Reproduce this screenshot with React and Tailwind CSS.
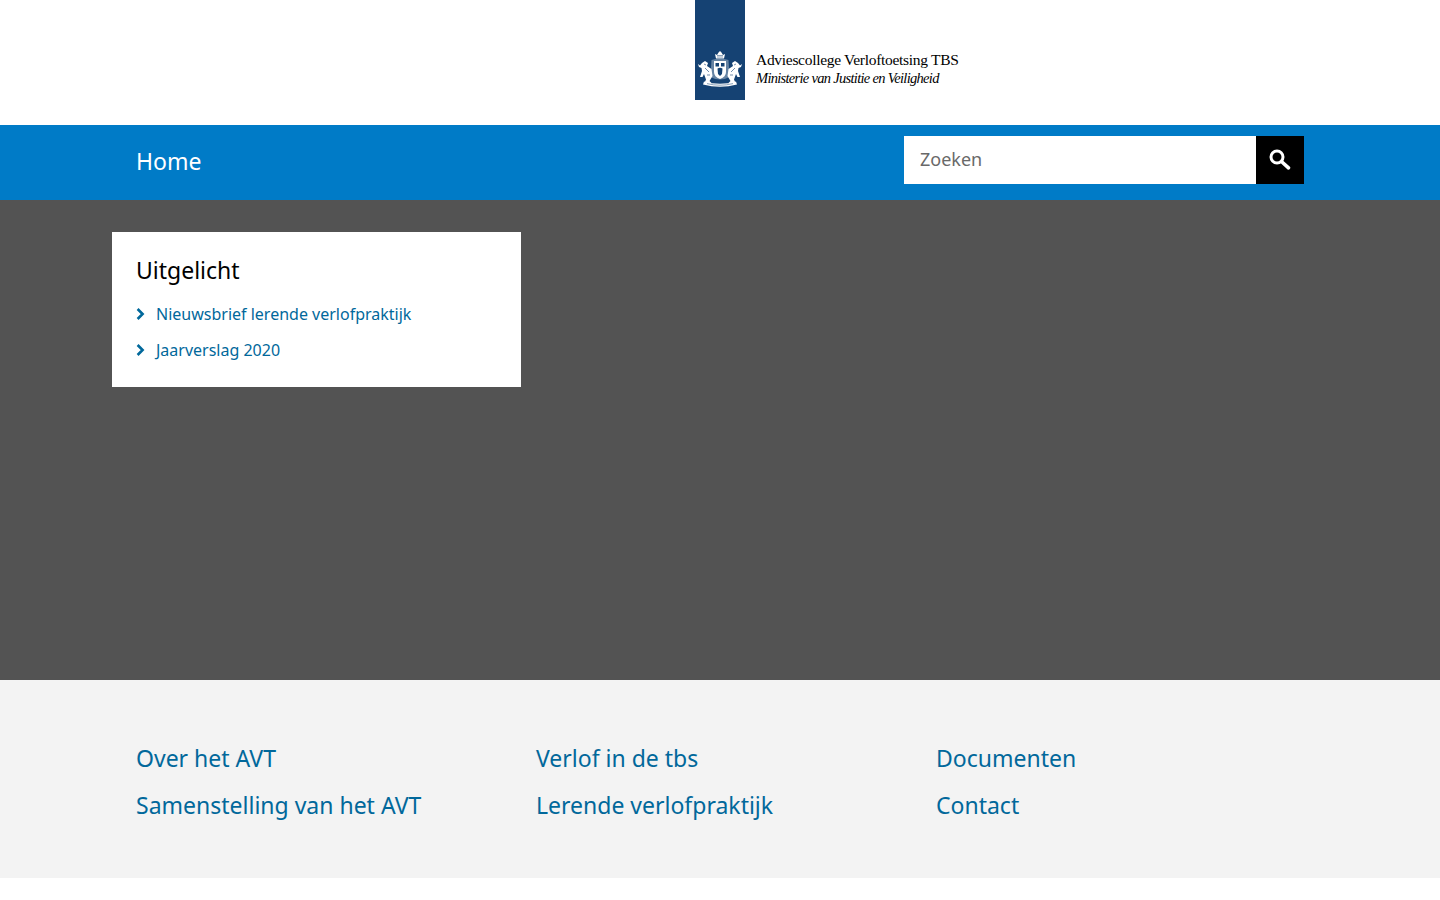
import React from 'react'

const sans = 'font-["Noto_Sans","Open_Sans",sans-serif]'

const Crest = () => (
  <svg width="46" height="38" viewBox="0 0 46 38" className="mt-[50px] mx-auto" fill="#fff">
    {/* crown */}
    <path d="M19 8.5 L18 4 L20 5 L21.5 2.5 L23 1 L24.5 2.5 L26 5 L28 4 L27 8.5 Z" />
    <path d="M20 5.5 H26 M20 7 H26" stroke="#154273" strokeWidth=".5" />
    {/* mantle */}
    <path d="M14.5 10 Q23 7.5 31.5 10 L32.5 27 Q23 32 13.5 27 Z" fillOpacity=".35" />
    {/* shield */}
    <path d="M17 11 H29 V22 Q29 27 23 29 Q17 27 17 22 Z" />
    <path d="M18.5 13 H22 V16.5 H18.5 Z M24 13 H27.5 V16.5 H24 Z M20.5 18.5 Q23 17 25.5 18.5 L25 24 L23 26 L21 24 Z" fill="#154273" />
    {/* left lion */}
    <path d="M1 14 L3 15.5 L5 13 L8 11 L11 13 L10 16 L14.5 19 L15.5 26 L12.5 31 L14.5 33 H7.5 L9 29.5 L7 24 L5.5 27 H3 L5 21 L4.5 18 L2 17 Z" />
    <path d="M7 14 L9 15 M8 18 L12 22 M10 25 L13 25" stroke="#154273" strokeWidth=".6" fill="none" />
    {/* right lion */}
    <path d="M45 14 L43 15.5 L41 13 L38 11 L35 13 L36 16 L31.5 19 L30.5 26 L33.5 31 L31.5 33 H38.5 L37 29.5 L39 24 L40.5 27 H43 L41 21 L41.5 18 L44 17 Z" />
    <path d="M39 14 L37 15 M38 18 L34 22 M36 25 L33 25" stroke="#154273" strokeWidth=".6" fill="none" />
    {/* motto */}
    <path d="M7 31.5 Q23 36 39 31.5 L40 34.5 Q23 39 6 34.5 Z" />
    <path d="M10 33.6 Q23 36.8 36 33.6" stroke="#154273" strokeWidth=".5" fill="none" />
  </svg>
)

const Chevron = () => (
  <svg width="9" height="12" viewBox="0 0 9 12" fill="none" className="shrink-0">
    <path d="M1.6 1 L6.6 6 L1.6 11" stroke="#01689b" strokeWidth="2.6" />
  </svg>
)

const SearchIcon = () => (
  <svg width="22" height="22" viewBox="0 0 22 22" fill="none">
    <circle cx="8" cy="8" r="6" stroke="#fff" strokeWidth="3" />
    <path d="M13 13 L19.5 18.8" stroke="#fff" strokeWidth="3.6" strokeLinecap="round" />
  </svg>
)

const footerCols = [
  ['Over het AVT', 'Samenstelling van het AVT'],
  ['Verlof in de tbs', 'Lerende verlofpraktijk'],
  ['Documenten', 'Contact'],
]

const App = () => {
  return (
    <div className={`min-h-[900px] bg-white ${sans}`}>
      <header className="h-[125px] pl-[695px]">
        <div className="flex">
          <div className="w-[50px] h-[100px] bg-[#154273]">
            <Crest />
          </div>
          <div className='ml-[11px] pt-[51px] text-black font-["Liberation_Serif",serif] whitespace-nowrap'>
            <div className="text-[15.5px] leading-[18px] tracking-[-0.3px]">Adviescollege Verloftoetsing TBS</div>
            <div className="text-[14.5px] leading-[18px] italic tracking-[-0.7px]">Ministerie van Justitie en Veiligheid</div>
          </div>
        </div>
      </header>

      <nav className="h-[75px] bg-[#007bc7] pl-[136px] pr-[136px] flex items-start justify-between">
        <a className="text-white text-[23px] leading-[32px] mt-[20px]">Home</a>
        <form className="flex mt-[11px]">
          <div className="w-[352px] h-[48px] bg-white pl-4 text-[18px] leading-[46px] text-[#696969]">Zoeken</div>
          <button type="button" className="w-[48px] h-[48px] bg-black flex items-center justify-center">
            <SearchIcon />
          </button>
        </form>
      </nav>

      <main className="h-[480px] bg-[#535353] pl-[112px] pt-[32px]">
        <section className="w-[409px] h-[155px] bg-white px-6 pt-[22px]">
          <h2 className="text-[23px] leading-[32px] text-black">Uitgelicht</h2>
          <ul className="mt-[16px] flex flex-col gap-[12px]">
            {['Nieuwsbrief lerende verlofpraktijk', 'Jaarverslag 2020'].map((item) => (
              <li key={item} className="flex items-center gap-[11px] h-[24px] text-[16px] text-[#01689b]">
                <Chevron />
                <a>{item}</a>
              </li>
            ))}
          </ul>
        </section>
      </main>

      <footer className="h-[198px] bg-[#f3f3f3] pl-[136px] pt-[62px] flex">
        {footerCols.map((col) => (
          <div key={col[0]} className="w-[400px] flex flex-col gap-[15px]">
            {col.map((link) => (
              <a key={link} className="text-[23px] leading-[32px] text-[#01689b]">{link}</a>
            ))}
          </div>
        ))}
      </footer>
    </div>
  )
}

export default App
